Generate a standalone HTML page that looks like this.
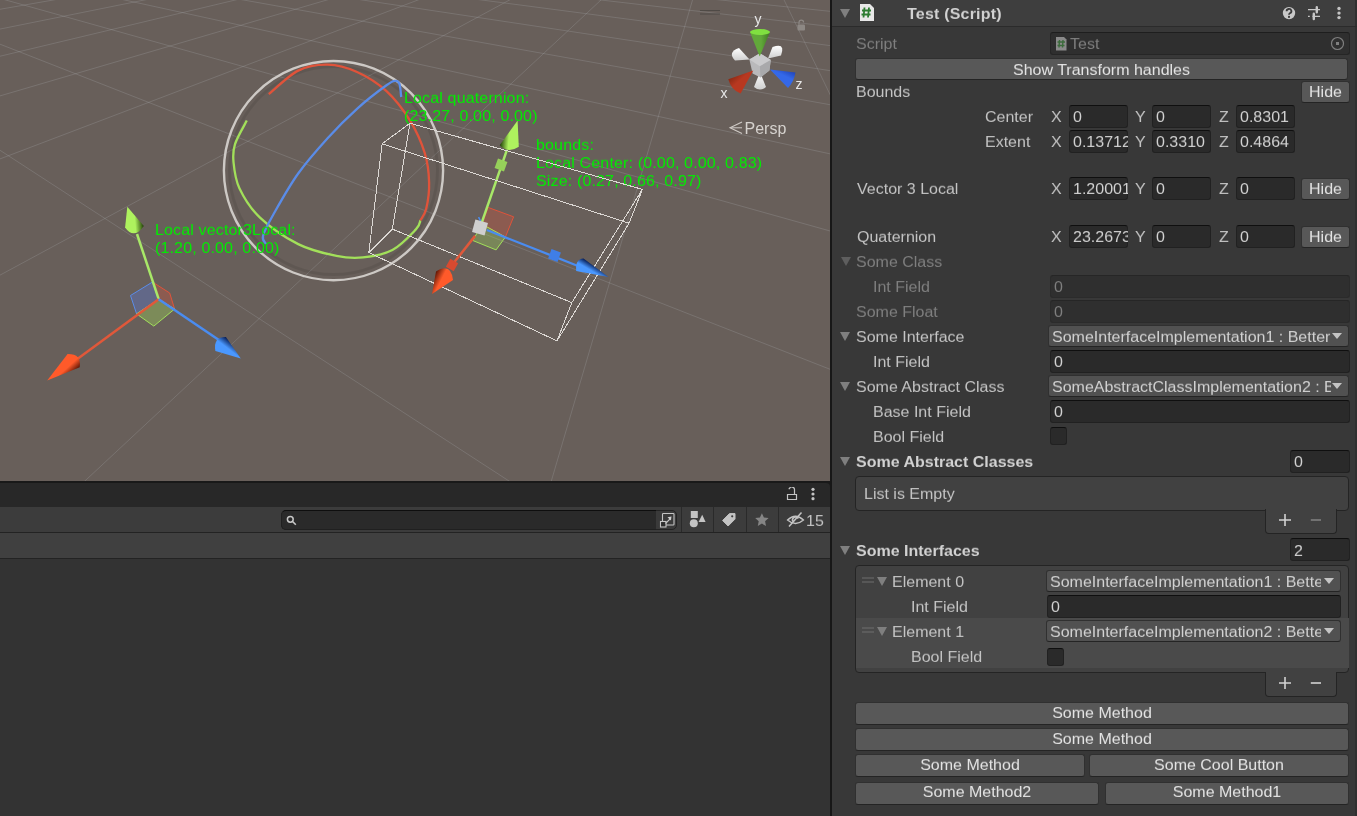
<!DOCTYPE html><html><head><meta charset="utf-8"><style>
html,body{margin:0;padding:0;background:#383838;width:1357px;height:816px;overflow:hidden}
body>div,body>svg{position:absolute}
.t{will-change:transform;transform:scaleY(0.92);transform-origin:0 15px;white-space:nowrap;line-height:20px;font-family:"Liberation Sans",sans-serif;font-size:16px}
.clip{overflow:hidden}
</style></head><body>
<div style="left:830px;top:0px;width:2px;height:816px;background:#171717"></div>
<div style="left:832px;top:0px;width:525px;height:816px;background:#383838"></div>
<div style="left:832px;top:0px;width:523px;height:26px;background:#3e3e3e"></div>
<div style="left:1355px;top:0px;width:2px;height:816px;background:#303030"></div>
<div style="left:832px;top:26px;width:525px;height:1px;background:#2b2b2b"></div>
<svg style="left:840px;top:9px" width="10" height="9"><path d="M0 0H10L5.0 9Z" fill="#7f7f7f"/></svg>
<svg style="left:860px;top:4px" width="15" height="18" viewBox="0 0 15 18"><path d="M0 0H10L14 4V17H0Z" fill="#e8e8e8"/><path d="M4.5 3.5L3.5 13.5M9 3.5L8 13.5M2 6.5H11M1.5 10.5H10.5" stroke="#2e7d32" stroke-width="1.8" fill="none"/></svg>
<div class="t" style="left:907px;top:4.00px;color:#d2d2d2;font-size:16px;font-weight:bold;letter-spacing:0.2px">Test (Script)</div>
<svg style="left:1282px;top:6px" width="14" height="14"><circle cx="7" cy="7.1" r="6.2" fill="#c8c8c8"/><path d="M4.6 5.3A2.4 2.2 0 1 1 7.9 7.2Q7 7.6 7 8.8" fill="none" stroke="#3a3a3a" stroke-width="1.8"/><circle cx="7" cy="10.9" r="1.05" fill="#3a3a3a"/></svg>
<svg style="left:1307px;top:6px" width="14" height="15"><path d="M1 3.6H13M1 10.4H2.8M5.5 10.4H13" stroke="#c8c8c8" stroke-width="1.3" fill="none"/><path d="M9.8 1.2V6.3M6.8 7.7V13" stroke="#c8c8c8" stroke-width="2.4" stroke-linecap="round" fill="none"/></svg>
<svg style="left:1336px;top:6px" width="6" height="15"><circle cx="3" cy="2.5" r="1.7" fill="#c4c4c4"/><circle cx="3" cy="7.1" r="1.7" fill="#c4c4c4"/><circle cx="3" cy="11.6" r="1.7" fill="#c4c4c4"/></svg>
<div class="t" style="left:856px;top:34.00px;color:#7f7f7f;font-size:16px;">Script</div>
<div style="left:1050px;top:32px;width:300px;height:23px;background:#2f2f2f;border:1px solid #262626;border-top-color:#1e1e1e;border-radius:3px;box-sizing:border-box"></div>
<svg style="left:1056px;top:37px" width="11" height="14" viewBox="0 0 11 14"><path d="M0 0H8L10.5 2.5V13.5H0Z" fill="#8a8a8a"/><path d="M3.5 3L3 10.5M7 3L6.5 10.5M1.5 5H9M1.5 8.5H8.5" stroke="#3b6b3b" stroke-width="1.4"/></svg>
<div class="t" style="left:1070px;top:34.00px;color:#7f7f7f;font-size:16px;">Test</div>
<svg style="left:1330px;top:36px" width="15" height="15"><circle cx="7.5" cy="7.5" r="6" fill="none" stroke="#7f7f7f" stroke-width="1.2"/><rect x="6" y="6" width="3" height="3" fill="#7f7f7f"/></svg>
<div style="left:855px;top:58px;width:493px;height:22px;background:#585858;border:1px solid #303030;border-bottom-color:#242424;border-radius:3px;box-sizing:border-box"></div>
<div class="t" style="left:855px;width:493px;text-align:center;top:60.00px;color:#e4e4e4;font-size:16px;">Show Transform handles</div>
<div class="t" style="left:856px;top:82.00px;color:#c4c4c4;font-size:16px;">Bounds</div>
<div style="left:1301px;top:81px;width:49px;height:22px;background:#585858;border:1px solid #303030;border-bottom-color:#242424;border-radius:3px;box-sizing:border-box"></div>
<div class="t" style="left:1301px;width:49px;text-align:center;top:82.00px;color:#e4e4e4;font-size:16px;">Hide</div>
<div class="t" style="left:985px;top:107.00px;color:#c4c4c4;font-size:16px;">Center</div>
<div class="t" style="left:1051px;top:107.00px;color:#c4c4c4;font-size:16px;">X</div>
<div style="left:1069px;top:105px;width:59px;height:23px;background:#2a2a2a;border:1px solid #212121;border-top-color:#0f0f0f;border-radius:3px;box-sizing:border-box"></div>
<div class="t clip" style="left:1073px;top:107px;width:55px;color:#d2d2d2">0</div>
<div class="t" style="left:1135px;top:107.00px;color:#c4c4c4;font-size:16px;">Y</div>
<div style="left:1152px;top:105px;width:59px;height:23px;background:#2a2a2a;border:1px solid #212121;border-top-color:#0f0f0f;border-radius:3px;box-sizing:border-box"></div>
<div class="t clip" style="left:1156px;top:107px;width:55px;color:#d2d2d2">0</div>
<div class="t" style="left:1219px;top:107.00px;color:#c4c4c4;font-size:16px;">Z</div>
<div style="left:1236px;top:105px;width:59px;height:23px;background:#2a2a2a;border:1px solid #212121;border-top-color:#0f0f0f;border-radius:3px;box-sizing:border-box"></div>
<div class="t clip" style="left:1240px;top:107px;width:55px;color:#d2d2d2">0.8301</div>
<div class="t" style="left:985px;top:132.00px;color:#c4c4c4;font-size:16px;">Extent</div>
<div class="t" style="left:1051px;top:132.00px;color:#c4c4c4;font-size:16px;">X</div>
<div style="left:1069px;top:130px;width:59px;height:23px;background:#2a2a2a;border:1px solid #212121;border-top-color:#0f0f0f;border-radius:3px;box-sizing:border-box"></div>
<div class="t clip" style="left:1073px;top:132px;width:55px;color:#d2d2d2">0.13712</div>
<div class="t" style="left:1135px;top:132.00px;color:#c4c4c4;font-size:16px;">Y</div>
<div style="left:1152px;top:130px;width:59px;height:23px;background:#2a2a2a;border:1px solid #212121;border-top-color:#0f0f0f;border-radius:3px;box-sizing:border-box"></div>
<div class="t clip" style="left:1156px;top:132px;width:55px;color:#d2d2d2">0.3310</div>
<div class="t" style="left:1219px;top:132.00px;color:#c4c4c4;font-size:16px;">Z</div>
<div style="left:1236px;top:130px;width:59px;height:23px;background:#2a2a2a;border:1px solid #212121;border-top-color:#0f0f0f;border-radius:3px;box-sizing:border-box"></div>
<div class="t clip" style="left:1240px;top:132px;width:55px;color:#d2d2d2">0.4864</div>
<div class="t" style="left:857px;top:179.00px;color:#c4c4c4;font-size:16px;">Vector 3 Local</div>
<div class="t" style="left:1051px;top:179.00px;color:#c4c4c4;font-size:16px;">X</div>
<div style="left:1069px;top:177px;width:59px;height:23px;background:#2a2a2a;border:1px solid #212121;border-top-color:#0f0f0f;border-radius:3px;box-sizing:border-box"></div>
<div class="t clip" style="left:1073px;top:179px;width:55px;color:#d2d2d2">1.20001</div>
<div class="t" style="left:1135px;top:179.00px;color:#c4c4c4;font-size:16px;">Y</div>
<div style="left:1152px;top:177px;width:59px;height:23px;background:#2a2a2a;border:1px solid #212121;border-top-color:#0f0f0f;border-radius:3px;box-sizing:border-box"></div>
<div class="t clip" style="left:1156px;top:179px;width:55px;color:#d2d2d2">0</div>
<div class="t" style="left:1219px;top:179.00px;color:#c4c4c4;font-size:16px;">Z</div>
<div style="left:1236px;top:177px;width:59px;height:23px;background:#2a2a2a;border:1px solid #212121;border-top-color:#0f0f0f;border-radius:3px;box-sizing:border-box"></div>
<div class="t clip" style="left:1240px;top:179px;width:55px;color:#d2d2d2">0</div>
<div style="left:1301px;top:178px;width:49px;height:22px;background:#585858;border:1px solid #303030;border-bottom-color:#242424;border-radius:3px;box-sizing:border-box"></div>
<div class="t" style="left:1301px;width:49px;text-align:center;top:179.00px;color:#e4e4e4;font-size:16px;">Hide</div>
<div class="t" style="left:857px;top:227.00px;color:#c4c4c4;font-size:16px;">Quaternion</div>
<div class="t" style="left:1051px;top:227.00px;color:#c4c4c4;font-size:16px;">X</div>
<div style="left:1069px;top:225px;width:59px;height:23px;background:#2a2a2a;border:1px solid #212121;border-top-color:#0f0f0f;border-radius:3px;box-sizing:border-box"></div>
<div class="t clip" style="left:1073px;top:227px;width:55px;color:#d2d2d2">23.2673</div>
<div class="t" style="left:1135px;top:227.00px;color:#c4c4c4;font-size:16px;">Y</div>
<div style="left:1152px;top:225px;width:59px;height:23px;background:#2a2a2a;border:1px solid #212121;border-top-color:#0f0f0f;border-radius:3px;box-sizing:border-box"></div>
<div class="t clip" style="left:1156px;top:227px;width:55px;color:#d2d2d2">0</div>
<div class="t" style="left:1219px;top:227.00px;color:#c4c4c4;font-size:16px;">Z</div>
<div style="left:1236px;top:225px;width:59px;height:23px;background:#2a2a2a;border:1px solid #212121;border-top-color:#0f0f0f;border-radius:3px;box-sizing:border-box"></div>
<div class="t clip" style="left:1240px;top:227px;width:55px;color:#d2d2d2">0</div>
<div style="left:1301px;top:226px;width:49px;height:22px;background:#585858;border:1px solid #303030;border-bottom-color:#242424;border-radius:3px;box-sizing:border-box"></div>
<div class="t" style="left:1301px;width:49px;text-align:center;top:227.00px;color:#e4e4e4;font-size:16px;">Hide</div>
<svg style="left:841px;top:257px" width="10" height="9"><path d="M0 0H10L5.0 9Z" fill="#5e5e5e"/></svg>
<div class="t" style="left:856px;top:252.00px;color:#7f7f7f;font-size:16px;">Some Class</div>
<div class="t" style="left:873px;top:277.00px;color:#7f7f7f;font-size:16px;">Int Field</div>
<div style="left:1050px;top:275px;width:300px;height:23px;background:#2f2f2f;border:1px solid #2b2b2b;border-top-color:#262626;border-radius:3px;box-sizing:border-box"></div>
<div class="t" style="left:1054px;top:277.00px;color:#7f7f7f;font-size:16px;">0</div>
<div class="t" style="left:856px;top:302.00px;color:#7f7f7f;font-size:16px;">Some Float</div>
<div style="left:1050px;top:300px;width:300px;height:23px;background:#2f2f2f;border:1px solid #2b2b2b;border-top-color:#262626;border-radius:3px;box-sizing:border-box"></div>
<div class="t" style="left:1054px;top:302.00px;color:#7f7f7f;font-size:16px;">0</div>
<svg style="left:840px;top:332px" width="10" height="9"><path d="M0 0H10L5.0 9Z" fill="#7f7f7f"/></svg>
<div class="t" style="left:856px;top:327.00px;color:#c4c4c4;font-size:16px;">Some Interface</div>
<div style="left:1048px;top:325px;width:301px;height:22px;background:#515151;border:1px solid #303030;border-bottom-color:#242424;border-radius:3px;box-sizing:border-box"></div>
<div class="t clip" style="left:1052px;top:327px;width:279px;color:#d2d2d2">SomeInterfaceImplementation1 : BetterSerialization</div>
<svg style="left:1332px;top:333px" width="10" height="7"><path d="M0 0H10L5 6Z" fill="#c4c4c4"/></svg>
<div class="t" style="left:873px;top:352.00px;color:#c4c4c4;font-size:16px;">Int Field</div>
<div style="left:1050px;top:350px;width:300px;height:23px;background:#2a2a2a;border:1px solid #212121;border-top-color:#0f0f0f;border-radius:3px;box-sizing:border-box"></div>
<div class="t" style="left:1054px;top:352.00px;color:#d2d2d2;font-size:16px;">0</div>
<svg style="left:840px;top:382px" width="10" height="9"><path d="M0 0H10L5.0 9Z" fill="#7f7f7f"/></svg>
<div class="t" style="left:856px;top:377.00px;color:#c4c4c4;font-size:16px;">Some Abstract Class</div>
<div style="left:1048px;top:375px;width:301px;height:22px;background:#515151;border:1px solid #303030;border-bottom-color:#242424;border-radius:3px;box-sizing:border-box"></div>
<div class="t clip" style="left:1052px;top:377px;width:279px;color:#d2d2d2">SomeAbstractClassImplementation2 : BetterSerialization</div>
<svg style="left:1332px;top:383px" width="10" height="7"><path d="M0 0H10L5 6Z" fill="#c4c4c4"/></svg>
<div class="t" style="left:873px;top:402.00px;color:#c4c4c4;font-size:16px;">Base Int Field</div>
<div style="left:1050px;top:400px;width:300px;height:23px;background:#2a2a2a;border:1px solid #212121;border-top-color:#0f0f0f;border-radius:3px;box-sizing:border-box"></div>
<div class="t" style="left:1054px;top:402.00px;color:#d2d2d2;font-size:16px;">0</div>
<div class="t" style="left:873px;top:427.00px;color:#c4c4c4;font-size:16px;">Bool Field</div>
<div style="left:1050px;top:427px;width:17px;height:18px;background:#2a2a2a;border:1px solid #212121;border-top-color:#0f0f0f;border-radius:3px;box-sizing:border-box"></div>
<svg style="left:840px;top:457px" width="10" height="9"><path d="M0 0H10L5.0 9Z" fill="#7f7f7f"/></svg>
<div class="t" style="left:856px;top:452.00px;color:#d2d2d2;font-size:16px;font-weight:bold;">Some Abstract Classes</div>
<div style="left:1290px;top:450px;width:60px;height:23px;background:#2a2a2a;border:1px solid #212121;border-top-color:#0f0f0f;border-radius:3px;box-sizing:border-box"></div>
<div class="t" style="left:1294px;top:452.00px;color:#d2d2d2;font-size:16px;">0</div>
<div style="left:855px;top:476px;width:494px;height:35px;background:#414141;border:1px solid #242424;border-radius:4px;box-sizing:border-box"></div>
<div class="t" style="left:863.5px;top:484.00px;color:#c4c4c4;font-size:16px;">List is Empty</div>
<div style="left:1265px;top:509px;width:72px;height:25px;background:#414141;border:1px solid #242424;border-top:none;border-radius:0 0 4px 4px;box-sizing:border-box"></div>
<svg style="left:1278px;top:513px" width="14" height="14"><path d="M7 1V13M1 7H13" stroke="#d2d2d2" stroke-width="1.6"/></svg>
<svg style="left:1309px;top:513px" width="14" height="14"><path d="M1.8 7H12" stroke="#7f7f7f" stroke-width="1.6"/></svg>
<svg style="left:840px;top:546px" width="10" height="9"><path d="M0 0H10L5.0 9Z" fill="#7f7f7f"/></svg>
<div class="t" style="left:856px;top:541.00px;color:#d2d2d2;font-size:16px;font-weight:bold;">Some Interfaces</div>
<div style="left:1290px;top:538px;width:60px;height:23px;background:#2a2a2a;border:1px solid #212121;border-top-color:#0f0f0f;border-radius:3px;box-sizing:border-box"></div>
<div class="t" style="left:1294px;top:541.00px;color:#d2d2d2;font-size:16px;">2</div>
<div style="left:855px;top:565px;width:494px;height:108px;background:#414141;border:1px solid #242424;border-radius:4px;box-sizing:border-box"></div>
<div style="left:856px;top:618px;width:493px;height:50px;background:#4a4a4a"></div>
<svg style="left:862px;top:577px" width="12" height="6"><path d="M0 1H12M0 5H12" stroke="#6f6f6f" stroke-width="1"/></svg>
<svg style="left:877px;top:577px" width="10" height="9"><path d="M0 0H10L5.0 9Z" fill="#7f7f7f"/></svg>
<div class="t" style="left:892px;top:572.00px;color:#c4c4c4;font-size:16px;">Element 0</div>
<div style="left:1046px;top:570px;width:295px;height:22px;background:#515151;border:1px solid #303030;border-bottom-color:#242424;border-radius:3px;box-sizing:border-box"></div>
<div class="t clip" style="left:1050px;top:572px;width:271px;color:#d2d2d2">SomeInterfaceImplementation1 : BetterSerialization</div>
<svg style="left:1324px;top:578px" width="10" height="7"><path d="M0 0H10L5 6Z" fill="#c4c4c4"/></svg>
<div class="t" style="left:911px;top:597.00px;color:#c4c4c4;font-size:16px;">Int Field</div>
<div style="left:1047px;top:595px;width:294px;height:23px;background:#2a2a2a;border:1px solid #212121;border-top-color:#0f0f0f;border-radius:3px;box-sizing:border-box"></div>
<div class="t" style="left:1051px;top:597.00px;color:#d2d2d2;font-size:16px;">0</div>
<svg style="left:862px;top:627px" width="12" height="6"><path d="M0 1H12M0 5H12" stroke="#6f6f6f" stroke-width="1"/></svg>
<svg style="left:877px;top:627px" width="10" height="9"><path d="M0 0H10L5.0 9Z" fill="#7f7f7f"/></svg>
<div class="t" style="left:892px;top:622.00px;color:#c4c4c4;font-size:16px;">Element 1</div>
<div style="left:1046px;top:620px;width:295px;height:22px;background:#515151;border:1px solid #303030;border-bottom-color:#242424;border-radius:3px;box-sizing:border-box"></div>
<div class="t clip" style="left:1050px;top:622px;width:271px;color:#d2d2d2">SomeInterfaceImplementation2 : BetterSerialization</div>
<svg style="left:1324px;top:628px" width="10" height="7"><path d="M0 0H10L5 6Z" fill="#c4c4c4"/></svg>
<div class="t" style="left:911px;top:647.00px;color:#c4c4c4;font-size:16px;">Bool Field</div>
<div style="left:1047px;top:648px;width:17px;height:18px;background:#2a2a2a;border:1px solid #212121;border-top-color:#0f0f0f;border-radius:3px;box-sizing:border-box"></div>
<div style="left:1265px;top:672px;width:72px;height:25px;background:#414141;border:1px solid #242424;border-top:none;border-radius:0 0 4px 4px;box-sizing:border-box"></div>
<svg style="left:1278px;top:676px" width="14" height="14"><path d="M7 1V13M1 7H13" stroke="#d2d2d2" stroke-width="1.6"/></svg>
<svg style="left:1309px;top:676px" width="14" height="14"><path d="M1.8 7H12" stroke="#d2d2d2" stroke-width="1.6"/></svg>
<div style="left:855px;top:702px;width:494px;height:23px;background:#585858;border:1px solid #303030;border-bottom-color:#242424;border-radius:3px;box-sizing:border-box"></div>
<div class="t" style="left:855px;width:494px;text-align:center;top:703.00px;color:#e4e4e4;font-size:16px;">Some Method</div>
<div style="left:855px;top:728px;width:494px;height:23px;background:#585858;border:1px solid #303030;border-bottom-color:#242424;border-radius:3px;box-sizing:border-box"></div>
<div class="t" style="left:855px;width:494px;text-align:center;top:729.00px;color:#e4e4e4;font-size:16px;">Some Method</div>
<div style="left:855px;top:754px;width:230px;height:23px;background:#585858;border:1px solid #303030;border-bottom-color:#242424;border-radius:3px;box-sizing:border-box"></div>
<div class="t" style="left:855px;width:230px;text-align:center;top:755.00px;color:#e4e4e4;font-size:16px;">Some Method</div>
<div style="left:1089px;top:754px;width:260px;height:23px;background:#585858;border:1px solid #303030;border-bottom-color:#242424;border-radius:3px;box-sizing:border-box"></div>
<div class="t" style="left:1089px;width:260px;text-align:center;top:755.00px;color:#e4e4e4;font-size:16px;">Some Cool Button</div>
<div style="left:855px;top:782px;width:244px;height:23px;background:#585858;border:1px solid #303030;border-bottom-color:#242424;border-radius:3px;box-sizing:border-box"></div>
<div class="t" style="left:855px;width:244px;text-align:center;top:782.00px;color:#e4e4e4;font-size:16px;">Some Method2</div>
<div style="left:1105px;top:782px;width:244px;height:23px;background:#585858;border:1px solid #303030;border-bottom-color:#242424;border-radius:3px;box-sizing:border-box"></div>
<div class="t" style="left:1105px;width:244px;text-align:center;top:782.00px;color:#e4e4e4;font-size:16px;">Some Method1</div>
<div style="left:0px;top:481px;width:830px;height:2px;background:#191919"></div>
<div style="left:824px;top:481px;width:6px;height:8px;background:#191919"></div>
<div style="left:0px;top:483px;width:830px;height:24px;background:#282828;border-top-right-radius:4px"></div>
<div style="left:0px;top:507px;width:830px;height:25px;background:#3c3c3c"></div>
<div style="left:0px;top:532px;width:830px;height:1px;background:#232323"></div>
<div style="left:0px;top:533px;width:830px;height:283px;background:#333333"></div>
<div style="left:0px;top:533px;width:830px;height:25px;background:#404040"></div>
<div style="left:0px;top:558px;width:830px;height:1px;background:#232323"></div>
<svg style="left:786px;top:487px" width="12" height="14"><path d="M1.5 7.5H10.5V12.5H1.5Z" fill="none" stroke="#c4c4c4" stroke-width="1.2"/><path d="M2.6 1.6H3.5A2.6 2.6 0 0 1 8.5 2.8V7.5" fill="none" stroke="#c4c4c4" stroke-width="1.2"/></svg>
<svg style="left:810px;top:487px" width="6" height="14"><circle cx="3" cy="2.3" r="1.6" fill="#c4c4c4"/><circle cx="3" cy="7" r="1.6" fill="#c4c4c4"/><circle cx="3" cy="11.7" r="1.6" fill="#c4c4c4"/></svg>
<div style="left:281px;top:510px;width:396px;height:20px;background:#3a3a3a;border:1px solid #232323;border-radius:5px;box-sizing:border-box"></div>
<div style="left:281px;top:510px;width:375px;height:20px;background:#2a2a2a;border:1px solid #202020;border-top-color:#0e0e0e;border-right:none;border-radius:5px 0 0 5px;box-sizing:border-box"></div>
<svg style="left:285px;top:513px" width="14" height="14"><circle cx="5.3" cy="6.3" r="2.9" fill="none" stroke="#c8c8c8" stroke-width="1.5"/><path d="M7.3 8.3L10.8 11.7" stroke="#c8c8c8" stroke-width="1.6"/></svg>
<svg style="left:658px;top:511px" width="18" height="18"><rect x="4.5" y="2.5" width="11.5" height="11.5" rx="0.8" fill="none" stroke="#c4c4c4" stroke-width="1.1"/><rect x="2.5" y="10.5" width="5.5" height="5.5" fill="#2d2d2d" stroke="#c4c4c4" stroke-width="1.1"/><path d="M7.5 12.5L12.6 7.3" stroke="#c4c4c4" stroke-width="1.2"/><path d="M9.5 6.2L13.5 5.6L12.9 9.6Z" fill="#d0d0d0"/></svg>
<div style="left:681px;top:507px;width:1px;height:25px;background:#2a2a2a"></div>
<div style="left:713px;top:507px;width:1px;height:25px;background:#2a2a2a"></div>
<div style="left:746px;top:507px;width:1px;height:25px;background:#2a2a2a"></div>
<div style="left:778px;top:507px;width:1px;height:25px;background:#2a2a2a"></div>
<svg style="left:688px;top:509px" width="20" height="20"><rect x="2.8" y="2" width="7" height="7" fill="#c4c4c4"/><circle cx="5.8" cy="14.2" r="4" fill="#c4c4c4"/><path d="M10.6 13L14.2 5.8L17.6 13Z" fill="#c4c4c4"/></svg>
<svg style="left:720px;top:511px" width="18" height="18"><path d="M2.6 9.5L9.5 2.6H15V8.1L8.1 15Z" fill="#c4c4c4" stroke="#c4c4c4" stroke-width="1" stroke-linejoin="round"/><circle cx="12.2" cy="5.3" r="1.1" fill="#3c3c3c"/></svg>
<svg style="left:754px;top:512px" width="16" height="16"><path d="M7.9 1.3L9.9 5.6L14.6 6.1L11.1 9.3L12 14L7.9 11.6L3.8 14L4.7 9.3L1.2 6.1L5.9 5.6Z" fill="#858585"/></svg>
<svg style="left:786px;top:511px" width="21" height="17"><path d="M1.5 9Q9.5 1.5 17.5 9Q9.5 16 1.5 9Z" fill="none" stroke="#c4c4c4" stroke-width="1.3"/><path d="M7 10.5A3 3 0 0 1 12.3 7.5" fill="none" stroke="#c4c4c4" stroke-width="1.6"/><path d="M3 15.5L15.5 1.5" stroke="#c4c4c4" stroke-width="1.5"/></svg>
<div class="t" style="left:806px;top:511.00px;color:#c4c4c4;font-size:16px;">15</div>
<svg style="left:0;top:0;will-change:transform" width="830" height="481" viewBox="0 0 830 481"><defs><linearGradient id="gc1" gradientUnits="userSpaceOnUse" x1="125.1" y1="227.4" x2="143.8" y2="225.9"><stop offset="0" stop-color="#aef25e"/><stop offset="0.55" stop-color="#aef25e"/><stop offset="1" stop-color="#1d3a05"/></linearGradient><linearGradient id="rc1" gradientUnits="userSpaceOnUse" x1="67.6" y1="354.1" x2="79.7" y2="367.3"><stop offset="0" stop-color="#ff5a2a"/><stop offset="0.55" stop-color="#ff5a2a"/><stop offset="1" stop-color="#5a1505"/></linearGradient><linearGradient id="bc1" gradientUnits="userSpaceOnUse" x1="215.4" y1="350.9" x2="225.9" y2="337.1"><stop offset="0" stop-color="#4a98ff"/><stop offset="0.55" stop-color="#4a98ff"/><stop offset="1" stop-color="#061a50"/></linearGradient><linearGradient id="gc2" gradientUnits="userSpaceOnUse" x1="518.8" y1="146.8" x2="499.7" y2="145.3"><stop offset="0" stop-color="#aef25e"/><stop offset="0.55" stop-color="#aef25e"/><stop offset="1" stop-color="#1d3a05"/></linearGradient><linearGradient id="rc2" gradientUnits="userSpaceOnUse" x1="453.0" y1="280.0" x2="436.0" y2="271.5"><stop offset="0" stop-color="#ff5a2a"/><stop offset="0.55" stop-color="#ff5a2a"/><stop offset="1" stop-color="#5a1505"/></linearGradient><linearGradient id="bc2" gradientUnits="userSpaceOnUse" x1="576.2" y1="271.0" x2="583.5" y2="258.5"><stop offset="0" stop-color="#4a98ff"/><stop offset="0.55" stop-color="#4a98ff"/><stop offset="1" stop-color="#061a50"/></linearGradient><linearGradient id="wc" x1="0" y1="0" x2="0" y2="1"><stop offset="0" stop-color="#ffffff"/><stop offset="1" stop-color="#cfcfcf"/></linearGradient><linearGradient id="vgy" gradientUnits="userSpaceOnUse" x1="750.0" y1="32.0" x2="770.0" y2="32.0"><stop offset="0" stop-color="#62a83a"/><stop offset="0.55" stop-color="#62a83a"/><stop offset="1" stop-color="#3f7a22"/></linearGradient><linearGradient id="vgx" gradientUnits="userSpaceOnUse" x1="740.6" y1="93.5" x2="728.3" y2="79.3"><stop offset="0" stop-color="#b83820"/><stop offset="0.55" stop-color="#b83820"/><stop offset="1" stop-color="#8a2a14"/></linearGradient><linearGradient id="vgz" gradientUnits="userSpaceOnUse" x1="788.0" y1="88.0" x2="795.5" y2="72.5"><stop offset="0" stop-color="#3468e8"/><stop offset="0.55" stop-color="#3468e8"/><stop offset="1" stop-color="#1f44b8"/></linearGradient></defs><rect width="830" height="481" fill="#685f5a"/><path d="M543.2 -96.7L-3637.0 376.5M556.9 -96.4L-5276.7 627.3M571.0 -96.1L-6366.1 855.9M585.6 -95.7L-5609.6 855.6M600.6 -95.4L-4853.2 855.2M616.1 -95.1L-4096.7 854.8M632.0 -94.8L-3340.2 854.5M648.5 -94.4L-2583.7 854.1M665.4 -94.1L-1827.3 853.7M683.0 -93.7L-1070.8 853.4M701.1 -93.3L-314.3 853.0M719.8 -92.9L442.2 852.7M739.1 -92.5L1198.6 852.3M759.1 -92.1L1955.1 851.9M779.9 -91.6L2711.6 851.6M801.4 -91.2L3468.0 851.2M823.6 -90.7L4224.5 850.8M846.7 -90.2L4981.0 850.5M300.6 -101.8L1540.7 -75.5M294.7 -101.6L1572.5 -73.8M288.6 -101.4L1607.0 -72.1M282.3 -101.1L1644.4 -70.1M275.8 -100.9L1685.0 -68.0M269.2 -100.6L1729.5 -65.7M262.3 -100.4L1778.3 -63.2M255.2 -100.1L1832.1 -60.4M248.0 -99.9L1891.7 -57.4M240.5 -99.6L1958.1 -53.9M232.7 -99.3L2032.5 -50.1M224.7 -99.0L2116.5 -45.8M216.4 -98.7L2212.0 -40.8M207.9 -98.4L2321.7 -35.2M199.1 -98.1L2448.8 -28.6M189.9 -97.7L2597.9 -20.9M180.5 -97.4L2775.4 -11.8M170.7 -97.0L2990.0 -0.7M160.5 -96.7L3254.8 13.0M150.0 -96.3L3589.9 30.2M139.1 -95.9L4027.4 52.8M127.7 -95.4L4622.7 83.5M115.9 -95.0L5479.9 127.8M103.6 -94.6L6820.9 196.9M90.9 -94.1L9215.9 320.5M77.5 -93.6L14712.6 604.1M63.7 -93.1L18750.1 843.8M49.2 -92.6L17768.5 844.3M34.0 -92.0L16786.8 844.8M18.2 -91.4L15805.2 845.3M1.6 -90.8L14823.5 845.7M-15.7 -90.2L13841.9 846.2M-33.9 -89.5L12860.2 846.7M-53.1 -88.8L11878.6 847.2M-73.2 -88.1L10897.0 847.6M-94.4 -87.3L9915.3 848.1M-116.7 -86.5L8933.7 848.6M-140.3 -85.6L7952.0 849.0M-165.2 -84.7L6970.4 849.5M-191.6 -83.7L5988.7 850.0M-219.6 -82.7L5007.1 850.5M-249.4 -81.6L4025.5 850.9M-281.1 -80.4L3043.8 851.4M-315.0 -79.2L2062.2 851.9M-351.2 -77.9L1080.5 852.3M-390.0 -76.4L98.9 852.8M-431.7 -74.9L-882.8 853.3M-476.6 -73.3L-1864.4 853.8M-525.2 -71.5L-2846.0 854.2M-577.9 -69.5L-3827.7 854.7M-635.1 -67.4L-4809.3 855.2M-697.7 -65.1L-5791.0 855.6" stroke="#b8bcc0" stroke-opacity="0.21" stroke-width="1" fill="none"/><circle cx="333.5" cy="170.6" r="104" fill="none" stroke="#000" stroke-opacity="0.08" stroke-width="3"/><circle cx="333.5" cy="170.6" r="109.6" fill="none" stroke="#cdc9c5" stroke-width="2.4"/><path d="M268.8 94.1 C273.7 90.2 288.4 75.5 298.2 70.6 C308.0 65.7 317.8 64.5 327.6 64.7 C337.4 64.9 347.2 67.6 357.0 72.0 C366.8 76.4 377.7 83.1 386.5 91.2 C395.3 99.3 403.6 110.3 410.0 120.6 C416.4 130.9 421.5 142.6 424.7 152.9 C427.9 163.2 428.9 173.1 429.1 182.4 C429.4 191.7 427.7 202.4 426.2 208.8 C424.7 215.2 421.3 218.6 420.3 220.6" stroke="#e0533a" stroke-width="2.3" fill="none"/><path d="M246.8 120.6 C244.8 124.5 237.2 137.2 235.0 144.1 C232.8 151.0 232.8 154.5 233.5 161.8 C234.2 169.2 235.0 178.9 239.4 188.2 C243.8 197.5 250.2 208.3 260.0 217.6 C269.8 226.9 285.4 237.7 298.2 244.1 C310.9 250.5 325.7 253.7 336.5 255.9 C347.3 258.1 353.7 258.4 363.0 257.4 C372.3 256.4 383.6 254.7 392.4 250.0 C401.2 245.3 411.2 234.3 415.9 229.4 C420.5 224.5 419.6 222.1 420.3 220.6" stroke="#a2e05a" stroke-width="2.3" fill="none"/><path d="M266.0 244.0 C265.5 242.7 261.8 240.9 263.0 236.0 C264.2 231.1 267.3 225.1 273.2 214.7 C279.1 204.3 289.1 186.2 298.2 173.5 C307.3 160.8 317.8 149.0 327.6 138.2 C337.4 127.4 347.2 117.6 357.0 108.8 C366.8 100.0 380.1 89.9 386.5 85.3 C392.9 80.7 393.1 81.1 395.3 80.9 C397.5 80.7 398.5 81.3 399.5 84.0 C400.5 86.7 400.9 94.8 401.2 97.0" stroke="#5a8ce8" stroke-width="2.3" fill="none"/><path d="M410 123.2L382.1 143.8M382.1 143.8L368.8 252.6M368.8 252.6L392.4 229.1M392.4 229.1L410 123.2M642.4 189.4L629.1 223.2M629.1 223.2L557 340.9M557 340.9L571.8 302.6M571.8 302.6L642.4 189.4M410 123.2L642.4 189.4M382.1 143.8L629.1 223.2M392.4 229.1L571.8 302.6M368.8 252.6L557 340.9" stroke="#dcd8d4" stroke-width="1" fill="none" shape-rendering="crispEdges"/><path d="M130.5 295.5L152.5 282L158.7 299.2L136.6 313.9Z" fill="#5a7ae0" fill-opacity="0.35" stroke="#5a8ce8" stroke-width="1"/><path d="M152.5 282L169.7 293L174.6 309L158.7 299.2Z" fill="#e0533a" fill-opacity="0.3" stroke="#e0533a" stroke-width="1"/><path d="M136.6 313.9L158.7 299.2L174.6 309L153.8 326.1Z" fill="#a2e05a" fill-opacity="0.35" stroke="#a2e05a" stroke-width="1"/><path d="M158.7 299.2L137 234" stroke="#a8e868" stroke-width="2.5"/><path d="M158.7 299.2L75.3 360.4" stroke="#e0583a" stroke-width="2.5"/><path d="M158.7 299.2L220 340.8" stroke="#4a8cf0" stroke-width="2.5"/><path d="M127.3 206.8 L125.1 227.4 Q134.0 240.0 143.8 225.9Z" fill="url(#gc1)"/><path d="M47.2 380.5 L67.6 354.1 Q82.0 354.0 79.7 367.3Z" fill="url(#rc1)"/><path d="M240.8 358.6 L215.4 350.9 Q213.0 337.0 225.9 337.1Z" fill="url(#bc1)"/><path d="M488 207.4L513.6 216.8L505.4 237L482.1 224.2Z" fill="#e0533a" fill-opacity="0.3" stroke="#e0533a" stroke-width="1"/><path d="M472.8 240.5L482.1 224.2L505.4 237L496.1 249.9Z" fill="#a2e05a" fill-opacity="0.3" stroke="#a2e05a" stroke-width="1"/><path d="M478.6 217.2L482.1 224.2" stroke="#4a8cf0" stroke-width="1.5"/><path d="M482 221.9L506.6 150.8" stroke="#a8e868" stroke-width="2.5"/><path d="M475.1 235.9L453 263.8" stroke="#e0583a" stroke-width="2.5"/><path d="M486.8 230L578 266" stroke="#4a8cf0" stroke-width="2.3"/><rect x="496" y="160" width="10" height="10" fill="#96d05a" transform="rotate(20 501 165)"/><rect x="447.5" y="260.5" width="9" height="9" fill="#d84a30" transform="rotate(30 452 265)"/><rect x="549.5" y="250.5" width="10" height="10" fill="#3f7ee6" transform="rotate(20 554.5 255.5)"/><rect x="473.5" y="221" width="13" height="13" fill="#cfcfcf" transform="rotate(15 480 227.5)"/><path d="M517.6 120.5 L518.8 146.8 Q508.0 154.0 499.7 145.3Z" fill="url(#gc2)"/><path d="M432.0 294.0 L453.0 280.0 Q451.0 262.0 436.0 271.5Z" fill="url(#rc2)"/><path d="M608.5 277.0 L576.2 271.0 Q575.0 259.0 583.5 258.5Z" fill="url(#bc2)"/><path d="M700 10.5H720M700 14H720" stroke="#4f4a46" stroke-width="1.1"/><rect x="797.5" y="24.5" width="7.5" height="6" rx="1" fill="#8d8884"/><path d="M799 24.5V22.5A2.3 2.3 0 0 1 803.6 22.5" stroke="#8d8884" stroke-width="1.2" fill="none"/><path d="M749.5 59.5L739 48Q727 52 735 60.5Z" fill="url(#wc)"/><path d="M768 58.5L772.5 47Q786 42 781 55.5Z" fill="url(#wc)"/><path d="M760 72L754 87Q760 92 766 87Z" fill="url(#wc)"/><path d="M749.4 59.6L759.9 53.3L770.8 59.9L769.4 70.6L760.5 77.5L752.6 73.5Z" fill="#b9b9bb"/><path d="M749.4 59.6L759.9 53.3L770.8 59.9L759.9 66.3Z" fill="#cacacc"/><path d="M759.9 66.3L770.8 59.9L769.4 70.6L760.5 77.5Z" fill="#a9a9ab"/><path d="M759.7 56.5 L750.0 32.0 Q760.0 36.0 770.0 32.0Z" fill="url(#vgy)"/><ellipse cx="760" cy="32" rx="10" ry="3" fill="#80e040"/><path d="M753.3 70.5 L740.6 93.5 Q731.0 90.0 728.3 79.3Z" fill="url(#vgx)"/><path d="M770.0 69.5 L788.0 88.0 Q794.0 81.5 795.5 72.5Z" fill="url(#vgz)"/><text x="754.5" y="23.5" font-family="Liberation Sans" font-size="14" fill="#e8e8e8">y</text><text x="720.5" y="97.5" font-family="Liberation Sans" font-size="14" fill="#e8e8e8">x</text><text x="795.5" y="88.5" font-family="Liberation Sans" font-size="14" fill="#e8e8e8">z</text><path d="M742 122L730 127.8L742 133.6" stroke="#cfcac6" stroke-width="1.1" fill="none"/><path d="M731 127.8H742" stroke="#cfcac6" stroke-width="1"/><text x="744.5" y="133.5" font-family="Liberation Sans" font-size="16" fill="#d6d2ce">Persp</text></svg>
<div class="t" style="left:155px;top:220.00px;color:#00ee00;font-size:16px;letter-spacing:0.15px">Local vector3Local:</div>
<div class="t" style="left:155px;top:238.00px;color:#00ee00;font-size:16px;letter-spacing:0.15px">(1.20, 0.00, 0.00)</div>
<div class="t" style="left:404px;top:88.00px;color:#00ee00;font-size:16px;letter-spacing:0.15px">Local quaternion:</div>
<div class="t" style="left:404px;top:106.00px;color:#00ee00;font-size:16px;letter-spacing:0.15px">(23.27, 0.00, 0.00)</div>
<div class="t" style="left:535.5px;top:135.00px;color:#00ee00;font-size:16px;letter-spacing:0.15px">bounds:</div>
<div class="t" style="left:535.5px;top:153.00px;color:#00ee00;font-size:16px;letter-spacing:0.15px">Local Center: (0.00, 0.00, 0.83)</div>
<div class="t" style="left:535.5px;top:171.00px;color:#00ee00;font-size:16px;letter-spacing:0.15px">Size: (0.27, 0.66, 0.97)</div>
<svg style="left:0;top:0" width="830" height="481"><path d="M410 123.2L642.4 189.4M382.1 143.8L629.1 223.2" stroke="#dcd8d4" stroke-width="1" fill="none" shape-rendering="crispEdges"/></svg>
</body></html>
